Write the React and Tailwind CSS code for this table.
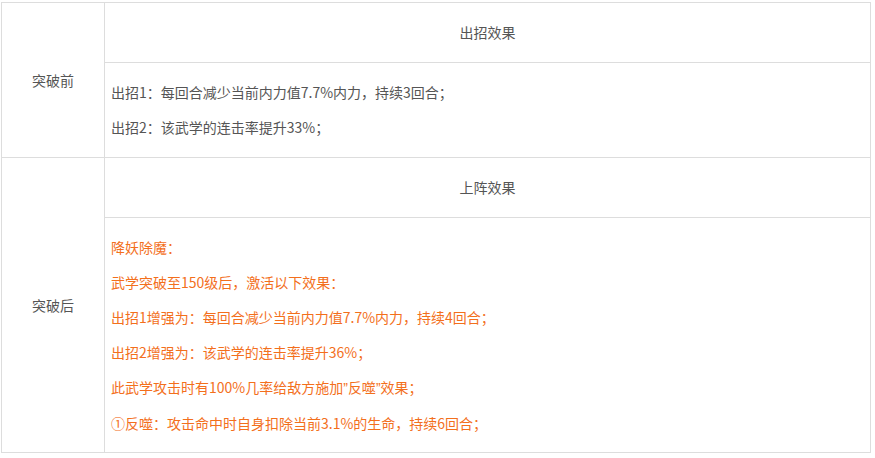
export default function App() {
  const font = { fontFamily: '"Noto Sans CJK SC", "Microsoft YaHei", sans-serif' };
  const q = <span style={{ fontFamily: '"Liberation Sans", sans-serif' }}>”</span>;
  const orange = [
    "降妖除魔：",
    "武学突破至150级后，激活以下效果：",
    "出招1增强为：每回合减少当前内力值7.7%内力，持续4回合；",
    "出招2增强为：该武学的连击率提升36%；",
    null,
    "①反噬：攻击命中时自身扣除当前3.1%的生命，持续6回合；",
  ];
  return (
    <div className="w-[875px] h-[458px] bg-white pt-[2px] pl-[1px]" style={font}>
      <table className="w-[870px] border-collapse text-[14px] text-[#555]">
        <tbody>
          <tr className="h-[60px]">
            <td rowSpan={2} className="w-[103px] border border-[#dddddd] text-center align-middle p-0">突破前</td>
            <td className="border border-[#dddddd] text-center align-middle p-0">出招效果</td>
          </tr>
          <tr className="h-[95px]">
            <td className="border border-[#dddddd] align-middle p-0 pl-[6px]">
              <p className="leading-[35px]">出招1：每回合减少当前内力值7.7%内力，持续3回合；</p>
              <p className="leading-[35px]">出招2：该武学的连击率提升33%；</p>
            </td>
          </tr>
          <tr className="h-[60px]">
            <td rowSpan={2} className="border border-[#dddddd] text-center align-middle p-0">突破后</td>
            <td className="border border-[#dddddd] text-center align-middle p-0">上阵效果</td>
          </tr>
          <tr className="h-[235px]">
            <td className="border border-[#dddddd] align-middle p-0 pl-[6px] text-[#f36f1c]">
              {orange.map((t, i) =>
                t === null ? (
                  <p key={i} className="leading-[35px]">
                    此武学攻击时有100%几率给敌方施加{q}反噬{q}效果；
                  </p>
                ) : (
                  <p key={i} className="leading-[35px]">{t}</p>
                )
              )}
            </td>
          </tr>
        </tbody>
      </table>
    </div>
  );
}
